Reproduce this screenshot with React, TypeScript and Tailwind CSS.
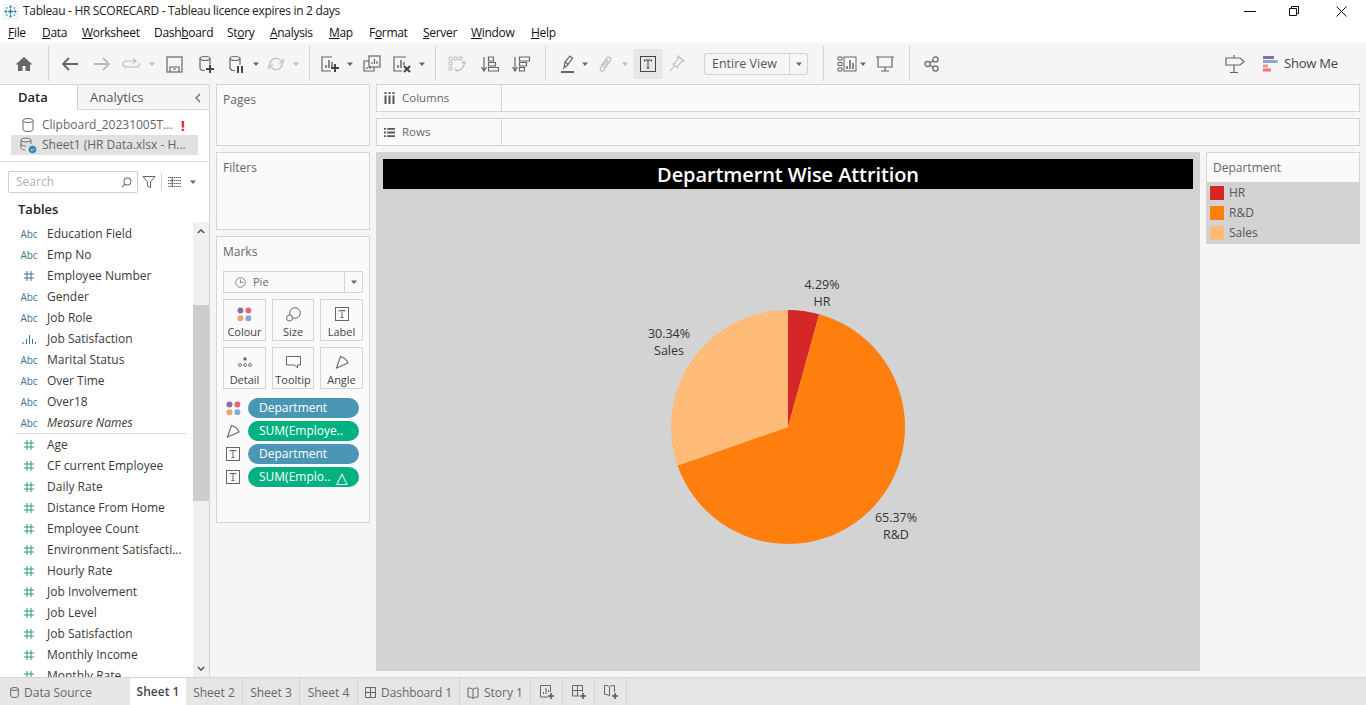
import React from "react";

const FONT = "font-['Open_Sans',sans-serif]";

const dims = [
  "Education Field",
  "Emp No",
  "Employee Number",
  "Gender",
  "Job Role",
  "Job Satisfaction",
  "Marital Status",
  "Over Time",
  "Over18",
  "Measure Names",
];
const measures = [
  "Age",
  "CF current Employee",
  "Daily Rate",
  "Distance From Home",
  "Employee Count",
  "Environment Satisfacti...",
  "Hourly Rate",
  "Job Involvement",
  "Job Level",
  "Job Satisfaction",
  "Monthly Income",
  "Monthly Rate",
];

const menu = [
  { pre: "", u: "F", post: "ile", cls: "w-[34px]" },
  { pre: "", u: "D", post: "ata", cls: "w-[40px]" },
  { pre: "", u: "W", post: "orksheet", cls: "w-[72px]" },
  { pre: "Dash", u: "b", post: "oard", cls: "w-[73px]" },
  { pre: "St", u: "o", post: "ry", cls: "w-[43px]" },
  { pre: "", u: "A", post: "nalysis", cls: "w-[59px]" },
  { pre: "", u: "M", post: "ap", cls: "w-[40px]" },
  { pre: "F", u: "o", post: "rmat", cls: "w-[54px]" },
  { pre: "", u: "S", post: "erver", cls: "w-[48px]" },
  { pre: "", u: "W", post: "indow", cls: "w-[60px]" },
  { pre: "", u: "H", post: "elp", cls: "w-[40px]" },
];

const Ico = ({ children, className = "" }: { children: React.ReactNode; className?: string }) => (
  <svg
    viewBox="0 0 20 20"
    fill="none"
    stroke="#666"
    strokeWidth="1.2"
    className={`w-[20px] h-[20px] shrink-0 ${className}`}
  >
    {children}
  </svg>
);

const Caret = ({ className = "", light = false }: { className?: string; light?: boolean }) => (
  <svg viewBox="0 0 8 8" className={`w-[8px] h-[8px] shrink-0 ${className}`}>
    <path d="M1 2.5h6L4 6z" fill={light ? "#bbb" : "#666"} />
  </svg>
);

const Sep = ({ className = "" }: { className?: string }) => (
  <div className={`w-px h-[35px] bg-[#d4d4d4] shrink-0 ${className}`} />
);

const TBox = ({ className = "" }: { className?: string }) => (
  <svg viewBox="0 0 14 14" className={`w-[14px] h-[14px] shrink-0 ${className}`} fill="none" stroke="#666">
    <rect x="0.5" y="0.5" width="13" height="13" />
    <path d="M4 4.5v-1h6v1M7 3.5v7M5.5 10.5h3" />
  </svg>
);

const Dots = ({ className = "" }: { className?: string }) => (
  <svg viewBox="0 0 14 14" className={`w-[15px] h-[15px] shrink-0 ${className}`}>
    <circle cx="3.2" cy="3.2" r="2.8" fill="#8b7199" />
    <circle cx="10.6" cy="3.2" r="2.8" fill="#e8657a" />
    <circle cx="3.2" cy="10.6" r="2.8" fill="#f0a070" />
    <circle cx="10.6" cy="10.6" r="2.8" fill="#85a9d4" />
  </svg>
);

const AngleIcon = ({ className = "" }: { className?: string }) => (
  <svg viewBox="0 0 14 14" className={`w-[14px] h-[14px] shrink-0 ${className}`} fill="none" stroke="#666" strokeWidth="1.1">
    <path d="M1.500 13L5.500 1.500Q11 3 13 8z" />
  </svg>
);

const FieldIcon = ({ type }: { type: string }) => {
  if (type === "abc") {
    return (
      <span className="w-[18px] text-center text-[10px] leading-none text-[#3c7493] shrink-0">
        Abc
      </span>
    );
  }
  if (type === "bars") {
    return (
      <svg viewBox="0 0 16 10" className="w-[16px] h-[10px] ml-[1px] mr-[1px] shrink-0" stroke="#3c7493" strokeWidth="1">
        <path d="M2 10V8M5.5 10V5M8.5 10V1M11.5 10V5M14.5 10V8" />
      </svg>
    );
  }
  const col = type === "hash-blue" ? "#3c7493" : "#2e9a78";
  return (
    <svg viewBox="0 0 12 12" className="w-[12px] h-[12px] mx-[3px] shrink-0" stroke={col} strokeWidth="1" fill="none">
      <path d="M4 1v10M8 1v10M1 4h10M1 8h10" />
    </svg>
  );
};

const Field = ({ name, type, italic = false }: { name: string; type: string; italic?: boolean }) => (
  <div className="h-[21px] flex items-center pl-[20px] shrink-0">
    <FieldIcon type={type} />
    <span className={`ml-[9px] text-[12px] text-[#3a3a3a] whitespace-nowrap ${italic ? "italic" : ""}`}>{name}</span>
  </div>
);

const MarkBtn = ({ label, children }: { label: string; children: React.ReactNode }) => (
  <div className="h-[42px] border border-[#d4d4d4] flex flex-col items-center pt-[5px] bg-[#fafafa]">
    <div className="h-[18px] flex items-center justify-center">{children}</div>
    <span className="text-[11px] leading-[16px] text-[#444] mt-[1px]">{label}</span>
  </div>
);

const Pill = ({ label, color, icon, end }: { label: string; color: string; icon: React.ReactNode; end?: string }) => (
  <div className="flex items-center h-[20px] pl-[10px] pr-[10px]">
    <div className="w-[18px] -ml-[3px] flex justify-center shrink-0">{icon}</div>
    <div className={`ml-[6px] flex-1 h-[20px] rounded-full ${color} flex items-center justify-between pl-[11px] pr-[11px] text-white text-[12px] whitespace-nowrap`}>
      <span>{label}</span>
      {end && <span className="text-[15px] leading-none">{end}</span>}
    </div>
  </div>
);

const Panel = ({ title, className = "", children }: { title: string; className?: string; children?: React.ReactNode }) => (
  <div className={`border border-[#d4d4d4] bg-[#fafafa] ${className}`}>
    <div className="pl-[6px] pt-[6px] text-[12px] leading-[18px] text-[#666]">{title}</div>
    {children}
  </div>
);

const slice = (start: number, pct: number, cx: number, cy: number, r: number) => {
  const a0 = (start / 100) * 2 * Math.PI;
  const a1 = ((start + pct) / 100) * 2 * Math.PI;
  const x0 = cx + r * Math.sin(a0);
  const y0 = cy - r * Math.cos(a0);
  const x1 = cx + r * Math.sin(a1);
  const y1 = cy - r * Math.cos(a1);
  const large = pct > 50 ? 1 : 0;
  return `M${cx} ${cy}L${x0} ${y0}A${r} ${r} 0 ${large} 1 ${x1} ${y1}Z`;
};

const tabs = [
  { label: "Sheet 2", cls: "w-[57px]" },
  { label: "Sheet 3", cls: "w-[57px]" },
  { label: "Sheet 4", cls: "w-[58px]" },
];

const Toolbar = () => (
  <div className="h-[41px] bg-[#f5f5f5] flex items-center shrink-0">
    {/* home */}
    <Ico className="ml-[14px]">
      <path d="M10 3L1.500 10.500h2.500V17h4.500v-5h3v5H16v-6.500h2.500z" fill="#666" stroke="none" />
    </Ico>
    <Sep className="ml-[14px]" />
    <Ico className="ml-[11px]">
      <path d="M18 10H3M9 4l-6 6 6 6" strokeWidth="1.800" />
    </Ico>
    <Ico className="ml-[12px]">
      <path d="M2 10h15M11 4l6 6-6 6" stroke="#bbb" strokeWidth="1.800" />
    </Ico>
    <Ico className="ml-[10px]">
      <path d="M13 7H4a2.500 2.500 0 0 0 0 6h11a2.500 2.500 0 0 0 2-4M11 4.500L14 7l-3 2.500" stroke="#bbb" />
    </Ico>
    <Caret light className="ml-[6px]" />
    <Ico className="ml-[8px]">
      <rect x="3" y="3" width="15" height="15" />
      <path d="M6 18v-5h9v5M9 15h3" />
    </Ico>
    <Ico className="ml-[12px]">
      <ellipse cx="9" cy="4.500" rx="5" ry="2" />
      <path d="M4 4.500v10l2 2h3M14 4.500v6" />
      <path d="M14 11v8M10 15h8" stroke="#444" strokeWidth="2" />
    </Ico>
    <Ico className="ml-[10px]">
      <ellipse cx="9" cy="4.500" rx="5" ry="2" />
      <path d="M4 4.500v10l2 2h3M14 4.500v6" />
      <path d="M12 12v7M16 12v7" stroke="#444" strokeWidth="2" />
    </Ico>
    <Caret className="ml-[6px]" />
    <Ico className="ml-[6px]">
      <path d="M4 10a6 6 0 0 1 11-3l1.500 2M16 10a6 6 0 0 1-11 3l-1.500-2M17 4v5h-4M3 16v-5h4" stroke="#bbb" />
    </Ico>
    <Caret light className="ml-[6px]" />
    <Sep className="ml-[9px]" />
    <Ico className="ml-[10px]">
      <path d="M12 3H2v14h9" />
      <path d="M6 14v-3M9 14V6M12 14V8" strokeWidth="1.500" />
      <path d="M15 10v8M11 14h8" stroke="#444" strokeWidth="2" />
    </Ico>
    <Caret className="ml-[6px]" />
    <Ico className="ml-[8px]">
      <rect x="7" y="2" width="11" height="11" fill="#f5f5f5" />
      <path d="M10 10V8M12.500 10V5M15 10V7" />
      <path d="M7 7H2v10h10v-4M5 15v-2M8 15v-3" />
    </Ico>
    <Ico className="ml-[10px]">
      <path d="M14 3H2v14h8" />
      <path d="M6 14v-3M9 14V6M12 11V8" strokeWidth="1.500" />
      <path d="M12 12l6 6M18 12l-6 6" stroke="#444" strokeWidth="2" />
    </Ico>
    <Caret className="ml-[6px]" />
    <Sep className="ml-[9px]" />
    <Ico className="ml-[11px]">
      <path d="M2 3h3v3H2zM7 3h3v3H7zM12 3h3v3h-3zM2 8h3v3H2zM2 13h3v3H2z" stroke="#bbb" strokeWidth="0.900" />
      <path d="M17 8c1 4-2 8-7 9M8 15l2 2 2-1M15 9l2-1.500 1.500 2" stroke="#bbb" />
    </Ico>
    <Ico className="ml-[13px]">
      <path d="M4 3v13M1.500 13L4 17l2.500-4" />
      <path d="M8.500 3h5v4h-5zM8.500 8.500h7v3.500h-7zM8.500 13.500h10v3.500h-10z" />
    </Ico>
    <Ico className="ml-[11px]">
      <path d="M4 3v13M1.500 13L4 17l2.500-4" />
      <path d="M8.500 3h10v4h-10zM8.500 8.500h7v3.500h-7zM8.500 13.500h5v3.500h-5z" />
    </Ico>
    <Sep className="ml-[14px]" />
    <Ico className="ml-[12px]">
      <path d="M6 14l1-6 5-6 2.500 2-4.500 6.500zM7 8l3.500 2.500" />
      <path d="M3 18h13" strokeWidth="2" />
    </Ico>
    <Caret className="ml-[3px]" />
    <Ico className="ml-[6px]">
      <path d="M6 12l6-8c1.500-2 5 0 3.500 2.500L9 16c-1.500 2.500-5 .5-3.500-2L11 6.500c.8-1 2.500 0 1.800 1.200L8 14" stroke="#bbb" />
    </Ico>
    <Caret light className="ml-[6px]" />
    <div className="ml-[4px] w-[30px] h-[30px] bg-[#e6e6e6] flex items-center justify-center shrink-0">
      <svg viewBox="0 0 16 16" className="w-[16px] h-[16px]" fill="none" stroke="#444">
        <rect x="0.500" y="0.500" width="15" height="15" />
        <path d="M4.500 5.500v-1.500h7v1.500M8 4v8M6.500 12h3" />
      </svg>
    </div>
    <Ico className="ml-[4px]">
      <path d="M11 2l6 5-3 1-3 4-1 2-4-4 2-1 3-4zM7 12l-4 5" stroke="#bbb" />
    </Ico>
    <div className="ml-[17px] w-[104px] h-[22px] border border-[#d4d4d4] rounded-[2px] flex items-center shrink-0">
      <span className="w-[85px] pl-[7px] text-[12.500px] text-[#555] whitespace-nowrap border-r border-[#d4d4d4] leading-[20px]">
        Entire View
      </span>
      <Caret className="ml-[5px]" />
    </div>
    <Sep className="ml-[15px]" />
    <Ico className="ml-[13px]">
      <path d="M1 3h4v3H1zM1 8.500h4v3H1zM1 14h4v3H1z" strokeWidth="1" />
      <rect x="7" y="3" width="12" height="14" strokeWidth="1" />
      <path d="M10 15v-3M13 15V6M16 15V9" strokeWidth="1.500" />
    </Ico>
    <Caret className="ml-[2px]" />
    <Ico className="ml-[8px]">
      <path d="M1 3h18M3 3v10h14V3M10 13v4M6 17h8" />
    </Ico>
    <Sep className="ml-[14px]" />
    <Ico className="ml-[12px]">
      <circle cx="5.500" cy="10" r="2.600" />
      <circle cx="13.500" cy="5.500" r="2.600" />
      <circle cx="13.500" cy="14.500" r="2.600" />
      <path d="M7.800 8.700l3.500-2M7.800 11.300l3.500 2" />
    </Ico>
    <Ico className="ml-auto">
      <path d="M1 4h14l4 3.500-4 3.500H1zM9 1v3M9 11v8M5 18.500h8" />
    </Ico>
    <div className="ml-[18px] mr-[28px] flex items-center w-[75px] shrink-0">
      <svg viewBox="0 0 15 16" className="w-[15px] h-[16px] shrink-0">
        <rect x="0" y="0" width="11" height="3" fill="#8b7199" />
        <rect x="0" y="4" width="14.500" height="3" fill="#85a9d4" />
        <rect x="0" y="8.500" width="5" height="3" fill="#f0a070" />
        <rect x="0" y="12.500" width="8" height="3" fill="#f4727f" />
      </svg>
      <span className="ml-[6px] text-[13px] tracking-[-0.2px] text-[#444] whitespace-nowrap">Show Me</span>
    </div>
  </div>
);

const DataPane = () => (
  <div className="w-[210px] shrink-0 bg-white border-r border-t border-[#d4d4d4] flex flex-col overflow-hidden">
    <div className="flex h-[25px] shrink-0">
      <div className="w-[77px] flex items-center pl-[18px] text-[13px] font-semibold text-[#222]">Data</div>
      <div className="flex-1 border-l border-b border-[#d4d4d4] bg-[#f5f5f5] flex items-center justify-between pl-[12px] pr-[7px] pt-[1px] text-[13px] text-[#555]">
        <span>Analytics</span>
        <svg viewBox="0 0 8 10" className="w-[8px] h-[10px]" fill="none" stroke="#666" strokeWidth="1.200">
          <path d="M6 1L2 5l4 4" />
        </svg>
      </div>
    </div>
    <div className="h-[52px] border-b border-[#e0e0e0] shrink-0 pt-[5px]">
      <div className="h-[20px] flex items-center pl-[22px] text-[12px] text-[#666]">
        <svg viewBox="0 0 12 14" className="w-[12px] h-[14px] shrink-0" fill="none" stroke="#666">
          <ellipse cx="6" cy="2.500" rx="5" ry="2" />
          <path d="M1 2.500v9c0 1 2 2 5 2s5-1 5-2v-9" />
        </svg>
        <span className="ml-[8px] whitespace-nowrap">Clipboard_20231005T...</span>
        <span className="ml-[8px] text-[#d1262c] font-bold text-[15px] leading-none">!</span>
      </div>
      <div className="ml-[11px] w-[187px] h-[20px] bg-[#e1e1e1] flex items-center pl-[9px] text-[12px] text-[#666]">
        <svg viewBox="0 0 17 17" className="w-[17px] h-[17px] shrink-0" fill="none" stroke="#666" strokeWidth="0.900">
          <ellipse cx="6" cy="3" rx="5" ry="2" />
          <path d="M1 3v8c0 1 2 2 4 2M11 3v4M1 7c0 1 2 2 5 2" />
          <circle cx="12.500" cy="12.500" r="3.800" fill="#3d86ad" stroke="none" />
          <path d="M10.800 12.500l1.200 1.200 2-2" stroke="#fff" />
        </svg>
        <span className="ml-[5px] whitespace-nowrap">Sheet1 (HR Data.xlsx - H...</span>
      </div>
    </div>
    <div className="flex items-center h-[22px] mt-[9px] shrink-0 pl-[8px]">
      <div className="w-[130px] h-[22px] border border-[#cfcfcf] rounded-[2px] flex items-center justify-between pl-[7px] pr-[5px] text-[12px] text-[#b0b0b0]">
        <span>Search</span>
        <svg viewBox="0 0 12 12" className="w-[11px] h-[11px]" fill="none" stroke="#666" strokeWidth="1.100">
          <circle cx="7" cy="5" r="3.800" />
          <path d="M4.300 7.700L1 11" />
        </svg>
      </div>
      <svg viewBox="0 0 14 14" className="ml-[4px] w-[14px] h-[14px] shrink-0" fill="none" stroke="#666">
        <path d="M1 1.500h12L8.500 7v5.500l-3-1.500V7z" />
      </svg>
      <div className="ml-[5px] w-px h-[18px] bg-[#d4d4d4]" />
      <svg viewBox="0 0 13 10" className="ml-[6px] w-[13px] h-[10px] shrink-0" stroke="#666" strokeWidth="1">
        <path d="M0 .5h13M0 3.500h13M0 6.500h13M0 9.500h13M4 0v10M4.500 0v10" strokeDasharray="1.500 .5" />
      </svg>
      <Caret className="ml-[8px]" />
    </div>
    <div className="flex-1 min-h-0 flex flex-col">
      <div className="h-[29px] pt-[4px] pl-[18px] flex items-center text-[13px] font-semibold text-[#222] shrink-0">Tables</div>
      <div className="flex-1 min-h-0 flex">
        <div className="flex-1 overflow-hidden flex flex-col pt-[1px]">
          {dims.map((d) => (
            <Field
              key={d}
              name={d}
              italic={d === "Measure Names"}
              type={d === "Employee Number" ? "hash-blue" : d === "Job Satisfaction" ? "bars" : "abc"}
            />
          ))}
          <div className="ml-[15px] mr-[6px] h-px bg-[#e0e0e0] shrink-0" />
          {measures.map((m) => (
            <Field key={m} name={m} type="hash" />
          ))}
        </div>
        <div className="w-[16px] bg-[#f0f0f0] flex flex-col items-center shrink-0">
          <svg viewBox="0 0 10 6" className="w-[8px] h-[5px] mt-[7px] shrink-0" fill="none" stroke="#555" strokeWidth="1.800">
            <path d="M1 5l4-4 4 4" />
          </svg>
          <div className="mt-[71px] w-full h-[196px] bg-[#cdcdcd] shrink-0" />
          <svg viewBox="0 0 10 6" className="w-[8px] h-[5px] mt-auto mb-[6px] shrink-0" fill="none" stroke="#555" strokeWidth="1.800">
            <path d="M1 1l4 4 4-4" />
          </svg>
        </div>
      </div>
    </div>
  </div>
);

const MarksCol = () => (
  <div className="w-[154px] shrink-0 ml-[6px] flex flex-col gap-[6px]">
    <Panel title="Pages" className="h-[62px]" />
    <Panel title="Filters" className="h-[78px]" />
    <Panel title="Marks" className="h-[287px]">
      <div className="mx-[6px] mt-[10px] h-[22px] border border-[#d4d4d4] flex items-center text-[11px] text-[#666]">
        <svg viewBox="0 0 11 11" className="ml-[11px] w-[11px] h-[11px] shrink-0" fill="none" stroke="#888">
          <circle cx="5.500" cy="5.500" r="4.800" />
          <path d="M5.500 2.500v3h3" />
        </svg>
        <span className="ml-[7px] flex-1 pt-[1px]">Pie</span>
        <div className="w-[18px] h-full border-l border-[#d4d4d4] flex items-center justify-center">
          <Caret />
        </div>
      </div>
      <div className="mx-[6px] mt-[6px] grid grid-cols-[43px_42px_43px] justify-between gap-y-[6px]">
        <MarkBtn label="Colour">
          <Dots />
        </MarkBtn>
        <MarkBtn label="Size">
          <svg viewBox="0 0 15 15" className="w-[15px] h-[15px]" fill="none" stroke="#666">
            <circle cx="9" cy="6" r="5.300" />
            <circle cx="3.500" cy="11" r="3" fill="#fafafa" />
          </svg>
        </MarkBtn>
        <MarkBtn label="Label">
          <TBox />
        </MarkBtn>
        <MarkBtn label="Detail">
          <svg viewBox="0 0 14 10" className="w-[14px] h-[10px]" fill="none" stroke="#666" strokeWidth="0.900">
            <circle cx="7" cy="2" r="1.700" fill="#666" stroke="none" />
            <circle cx="2" cy="8" r="1.500" />
            <circle cx="7" cy="8" r="1.500" />
            <circle cx="12" cy="8" r="1.500" />
          </svg>
        </MarkBtn>
        <MarkBtn label="Tooltip">
          <svg viewBox="0 0 15 13" className="w-[15px] h-[13px]" fill="none" stroke="#666">
            <path d="M.5.500h14v8.500h-3v3l-3-3H.5z" />
          </svg>
        </MarkBtn>
        <MarkBtn label="Angle">
          <AngleIcon />
        </MarkBtn>
      </div>
      <div className="mt-[9px] flex flex-col gap-[3px]">
        <Pill label="Department" color="bg-[#4b96b4]" icon={<Dots />} />
        <Pill label="SUM(Employe.." color="bg-[#00b180]" icon={<AngleIcon />} />
        <Pill label="Department" color="bg-[#4b96b4]" icon={<TBox />} />
        <Pill label="SUM(Emplo.." color="bg-[#00b180]" icon={<TBox />} end="△" />
      </div>
    </Panel>
  </div>
);

const Shelf = ({ label, icon }: { label: string; icon: React.ReactNode }) => (
  <div className="h-[28px] border border-[#d4d4d4] bg-[#fafafa] flex">
    <div className="w-[125px] border-r border-[#d4d4d4] flex items-center pl-[7px] text-[11.500px] text-[#666]">
      {icon}
      <span className="ml-[7px]">{label}</span>
    </div>
  </div>
);

const PieChart = () => (
  <svg viewBox="0 0 824 482" className="w-[824px] h-[482px] shrink-0">
    <path d={slice(0, 4.29, 412, 238, 117)} fill="#d62728" />
    <path d={slice(4.29, 65.37, 412, 238, 117)} fill="#ff7f0e" />
    <path d={slice(69.66, 30.34, 412, 238, 117)} fill="#ffbb78" />
    <g fontSize="12.500" fill="#333" textAnchor="middle" fontFamily="'Open Sans', sans-serif">
      <text x="446" y="100">4.29%</text>
      <text x="446" y="117">HR</text>
      <text x="293" y="149">30.34%</text>
      <text x="293" y="166">Sales</text>
      <text x="520" y="333">65.37%</text>
      <text x="520" y="350">R&amp;D</text>
    </g>
  </svg>
);

const legend = [
  { name: "HR", cls: "bg-[#d62728]" },
  { name: "R&D", cls: "bg-[#ff7f0e]" },
  { name: "Sales", cls: "bg-[#ffbb78]" },
];

const View = () => (
  <div className="flex-1 ml-[6px] mr-[6px] flex flex-col min-w-0">
    <div className="flex flex-col gap-[6px]">
      <Shelf
        label="Columns"
        icon={
          <svg viewBox="0 0 11 12" className="w-[11px] h-[12px]" stroke="#555" strokeWidth="2">
            <path d="M1.500 0v2M5.500 0v2M9.500 0v2M1.500 3.500V12M5.500 3.500V12M9.500 3.500V12" />
          </svg>
        }
      />
      <Shelf
        label="Rows"
        icon={
          <svg viewBox="0 0 12 11" className="w-[11px] h-[11px]" stroke="#555" strokeWidth="2">
            <path d="M0 1.500h2M0 5.500h2M0 9.500h2M3.500 1.500H12M3.500 5.500H12M3.500 9.500H12" />
          </svg>
        }
      />
    </div>
    <div className="flex mt-[6px] gap-[6px]">
      <div className="w-[824px] h-[519px] bg-[#d3d3d3] shrink-0 flex flex-col">
        <div className="mx-[7px] mt-[7px] w-[810px] h-[30px] pt-[2px] bg-black text-white text-[20px] font-semibold tracking-[-0.1px] flex items-center justify-center shrink-0">
          Departmernt Wise Attrition
        </div>
        <PieChart />
      </div>
      <div className="flex-1 h-[92px] border border-[#d4d4d4] border-b-0 flex flex-col">
        <div className="h-[29px] bg-[#fafafa] flex items-center pl-[6px] text-[12px] text-[#666] shrink-0">Department</div>
        <div className="flex-1 bg-[#d3d3d3] pl-[3px] pt-[1px]">
          {legend.map((l) => (
            <div key={l.name} className="h-[20px] flex items-center text-[12px] text-[#555]">
              <div className={`w-[14px] h-[14px] ${l.cls}`} />
              <span className="ml-[5px]">{l.name}</span>
            </div>
          ))}
        </div>
      </div>
    </div>
  </div>
);

const TabBar = () => (
  <div className="h-[28px] bg-[#e6e6e6] border-t border-[#d4d4d4] flex text-[12px] text-[#666] shrink-0">
    <div className="w-[130px] flex items-center pl-[10px] pt-[2px]">
      <svg viewBox="0 0 9 11" className="w-[9px] h-[11px] shrink-0" fill="none" stroke="#666">
        <ellipse cx="4.500" cy="2" rx="3.800" ry="1.500" />
        <path d="M.7 2v7c0 .8 1.500 1.500 3.800 1.500S8.300 9.800 8.300 9V2" />
      </svg>
      <span className="ml-[5px]">Data Source</span>
    </div>
    <div className="w-[56px] bg-white flex items-center justify-center pt-[1px] font-semibold text-[#444]">Sheet 1</div>
    {tabs.map((t) => (
      <div key={t.label} className={`${t.cls} border-r border-[#d4d4d4] flex items-center justify-center pt-[2px]`}>
        {t.label}
      </div>
    ))}
    <div className="w-[102px] border-r border-[#d4d4d4] flex items-center justify-center pt-[2px]">
      <svg viewBox="0 0 11 11" className="w-[11px] h-[11px] shrink-0" fill="none" stroke="#666">
        <path d="M.5.500h10v10H.5zM5.500.5v10M.5 5.500h10" />
      </svg>
      <span className="ml-[5px] tracking-[-0.1px]">Dashboard 1</span>
    </div>
    <div className="w-[71px] border-r border-[#d4d4d4] flex items-center justify-center pt-[2px]">
      <svg viewBox="0 0 12 12" className="w-[12px] h-[12px] shrink-0" fill="none" stroke="#666">
        <path d="M6 2.500C4.500 1 3 1 1 1v9c2 0 3.500 0 5 1.500 1.500-1.500 3-1.500 5-1.500V1C9 1 7.500 1 6 2.500zM6 2.500v9" />
      </svg>
      <span className="ml-[5px]">Story 1</span>
    </div>
    <div className="w-[32px] border-r border-[#d4d4d4] flex items-center justify-center">
      <svg viewBox="0 0 16 16" className="w-[16px] h-[16px]" fill="none" stroke="#666">
        <path d="M9 13H1.500V1.500h10V8M4.500 10V8M7 10V4M9.500 8V6" />
        <path d="M12 9v6M9 12h6" stroke="#555" strokeWidth="1.500" />
      </svg>
    </div>
    <div className="w-[32px] border-r border-[#d4d4d4] flex items-center justify-center">
      <svg viewBox="0 0 16 16" className="w-[16px] h-[16px]" fill="none" stroke="#666">
        <path d="M8 12H1.500V1.500h10V8M6.500 1.500V12M1.500 6.500h10" />
        <path d="M12 9v6M9 12h6" stroke="#555" strokeWidth="1.500" />
      </svg>
    </div>
    <div className="w-[32px] border-r border-[#d4d4d4] flex items-center justify-center">
      <svg viewBox="0 0 16 16" className="w-[16px] h-[16px]" fill="none" stroke="#666">
        <path d="M6.500 3C5 1.500 3.500 1.500 1.500 1.500v9c2 0 3.500 0 5 1.500M6.500 3c1.500-1.500 3-1.500 5-1.500V8M6.500 3v9" />
        <path d="M12 9v6M9 12h6" stroke="#555" strokeWidth="1.500" />
      </svg>
    </div>
  </div>
);

export default function App() {
  return (
    <div className={`w-[1366px] h-[705px] overflow-hidden flex flex-col bg-white ${FONT}`}>
      {/* title bar */}
      <div className="h-[22px] flex items-center shrink-0">
        <svg viewBox="0 0 16 16" className="ml-[3px] w-[15px] h-[15px] shrink-0" strokeWidth="1.100" fill="none">
          <rect x="0.500" y="0.500" width="15" height="15" stroke="#d5e4ee" strokeWidth="1" strokeDasharray="2 1" />
          <g stroke="#2f7fb5">
            <path d="M8 5v6M5 8h6" strokeWidth="1.400" />
            <path d="M8 1.500v3M6.500 3h3M8 11.500v3M6.500 13h3M1.500 8h3M3 6.500v3M11.500 8h3M13 6.500v3" />
          </g>
          <g stroke="#7fb0cf">
            <path d="M4 3v2.500M2.800 4.200h2.500M12 3v2.500M10.800 4.200h2.500M4 10.500V13M2.800 11.800h2.500M12 10.500V13M10.800 11.800h2.500" />
          </g>
        </svg>
        <span className="ml-[5px] text-[12px] tracking-[-0.31px] text-[#222] whitespace-nowrap">
          Tableau - HR SCORECARD - Tableau licence expires in 2 days
        </span>
        <svg viewBox="0 0 12 1" className="ml-auto w-[12px] h-px shrink-0" stroke="#111">
          <path d="M0 .5h12" />
        </svg>
        <svg viewBox="0 0 10 10" className="ml-[33px] w-[10px] h-[10px] shrink-0" fill="none" stroke="#111">
          <path d="M.5 2.500h7v7h-7zM2.500 2.500v-2h7v7h-2" />
        </svg>
        <svg viewBox="0 0 11 11" className="ml-[37px] mr-[19px] w-[11px] h-[11px] shrink-0" fill="none" stroke="#111">
          <path d="M.5.500l10 10M10.500.500l-10 10" />
        </svg>
      </div>
      {/* menu */}
      <div className="h-[21px] flex items-center pl-[8px] text-[12px] tracking-[-0.3px] text-[#111] shrink-0">
        {menu.map((m) => (
          <div key={m.u + m.post} className={`${m.cls} whitespace-nowrap`}>
            {m.pre}
            <span className="underline">{m.u}</span>
            {m.post}
          </div>
        ))}
      </div>
      <Toolbar />
      <div className="flex-1 min-h-0 flex bg-[#f5f5f5]">
        <DataPane />
        <MarksCol />
        <View />
      </div>
      <TabBar />
    </div>
  );
}
